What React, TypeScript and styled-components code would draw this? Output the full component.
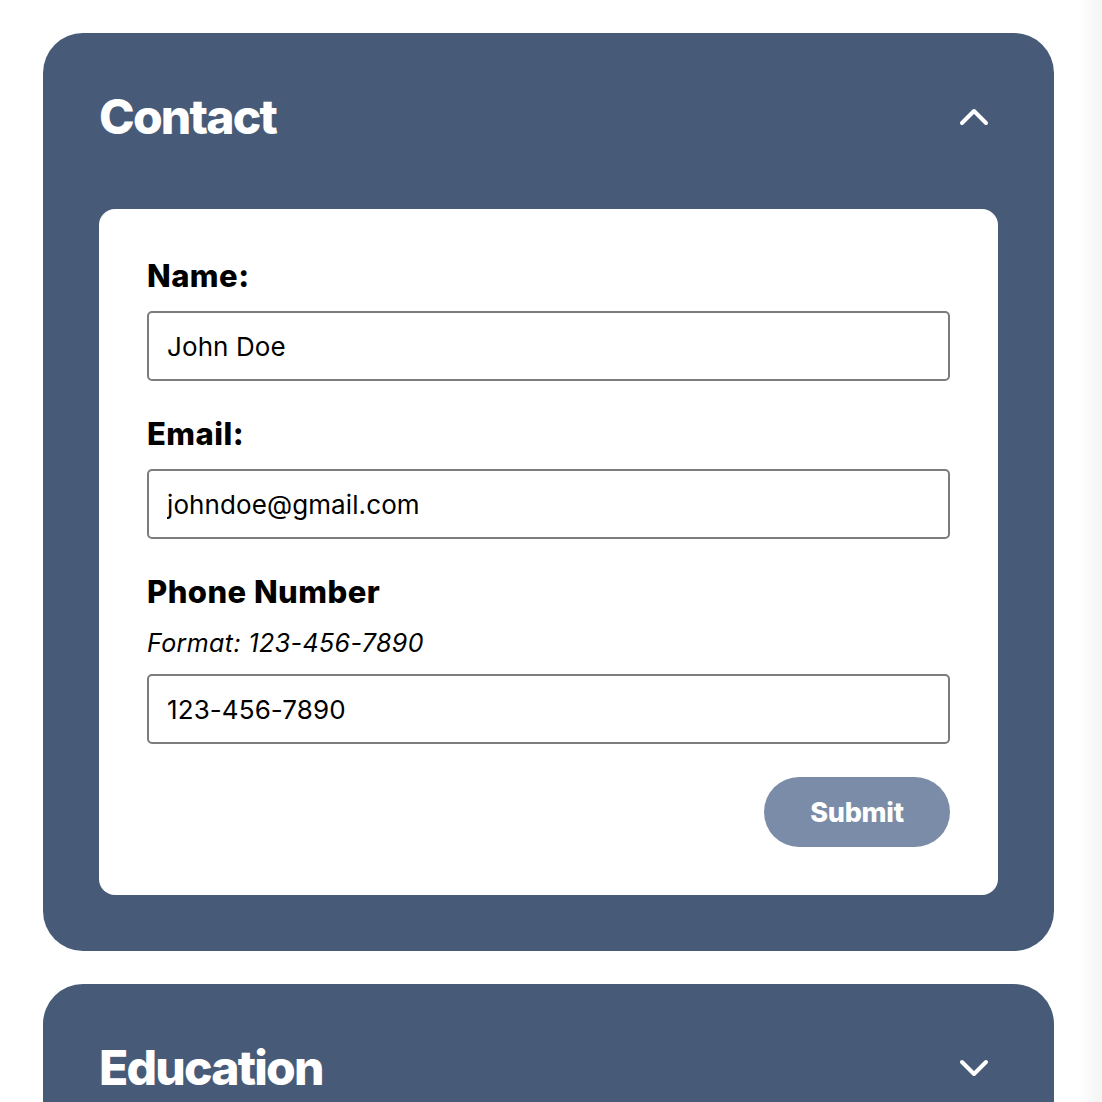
import React from "react";
import styled, { createGlobalStyle } from "styled-components";
import { ChevronUp, ChevronDown } from "lucide-react";

const GlobalStyle = createGlobalStyle`
  html, body {
    margin: 0;
    padding: 0;
  }
  body {
    font-family: Inter, "Noto Sans", sans-serif;
    background: linear-gradient(to right, #ffffff calc(100% - 24px), #f4f4f4 100%);
    min-height: 100vh;
  }
  * { box-sizing: border-box; }
`;

const Page = styled.main`
  display: flex;
  flex-direction: column;
  gap: 33px;
  padding: 33px 48px 0 43px;
`;

const Card = styled.section`
  background: #475b78;
  border-radius: 40px;
  padding: 56px;
  color: #fff;
`;

const Header = styled.div<{ $open?: boolean }>`
  display: flex;
  align-items: center;
  justify-content: space-between;
  height: 56px;
  margin-bottom: ${(p) => (p.$open ? "64px" : "0")};
`;

const Title = styled.h2`
  margin: 0;
  font-size: 48px;
  line-height: 56px;
  font-weight: 800;
  letter-spacing: -1.8px;
`;

const Toggle = styled.button`
  display: flex;
  align-items: center;
  justify-content: center;
  width: 48px;
  height: 48px;
  padding: 0;
  border: none;
  background: transparent;
  color: #fff;
  cursor: pointer;
`;

const Panel = styled.form`
  background: #fff;
  border-radius: 16px;
  padding: 48px;
  display: flex;
  flex-direction: column;
  gap: 34px;
  color: #000;
`;

const Field = styled.div`
  display: flex;
  flex-direction: column;
`;

const Label = styled.label`
  font-size: 31px;
  line-height: 34px;
  font-weight: 800;
  padding-top: 2px;
  margin-bottom: 18px;
  letter-spacing: 0.45px;
`;

const Hint = styled.p`
  margin: -18px 0 16px;
  padding-top: 20px;
  font-size: 25px;
  line-height: 29px;
  font-style: italic;
  letter-spacing: 0.4px;
`;

const Input = styled.input`
  height: 70px;
  width: 100%;
  border: 2px solid #7c7c7c;
  border-radius: 5px;
  padding: 0 18px;
  font-family: Inter, "Noto Sans", sans-serif;
  font-size: 26px;
  letter-spacing: 0.1px;
  color: #000;
  background: #fff;
  outline: none;
`;

const Actions = styled.div`
  display: flex;
  justify-content: flex-end;
  margin-top: -1px;
`;

const SubmitButton = styled.button`
  height: 70px;
  width: 186px;
  border: none;
  border-radius: 35px;
  background: #7b8ca8;
  color: #fff;
  font-family: Inter, "Noto Sans", sans-serif;
  font-size: 27px;
  font-weight: 800;
  letter-spacing: -0.3px;
  cursor: pointer;
`;

export default function App() {
  return (
    <>
      <GlobalStyle />
      <Page>
        <Card>
          <Header $open>
            <Title>Contact</Title>
            <Toggle type="button" aria-label="Collapse">
              <ChevronUp size={48} strokeWidth={2} />
            </Toggle>
          </Header>
          <Panel onSubmit={(e) => e.preventDefault()}>
            <Field>
              <Label htmlFor="name">Name:</Label>
              <Input id="name" defaultValue="John Doe" />
            </Field>
            <Field>
              <Label htmlFor="email">Email:</Label>
              <Input id="email" defaultValue="johndoe@gmail.com" />
            </Field>
            <Field>
              <Label htmlFor="phone">Phone Number</Label>
              <Hint>Format: 123-456-7890</Hint>
              <Input id="phone" defaultValue="123-456-7890" />
            </Field>
            <Actions>
              <SubmitButton type="submit">Submit</SubmitButton>
            </Actions>
          </Panel>
        </Card>
        <Card>
          <Header>
            <Title>Education</Title>
            <Toggle type="button" aria-label="Expand">
              <ChevronDown size={48} strokeWidth={2} />
            </Toggle>
          </Header>
        </Card>
      </Page>
    </>
  );
}
